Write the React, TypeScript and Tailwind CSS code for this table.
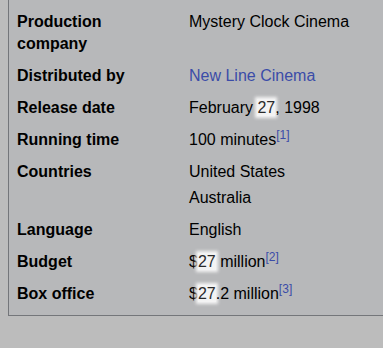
function Glow({ children }: { children: React.ReactNode }) {
  return (
    <span className="bg-[#f3f3f3] text-[#2a2a2a] shadow-[0_0_3px_2px_#f3f3f3]">
      {children}
    </span>
  );
}

function Ref({ n }: { n: number }) {
  return (
    <span className="relative -top-[6px] text-[12px] leading-none text-[#3b4ca8]">
      [{n}]
    </span>
  );
}

function Row({
  label,
  children,
}: {
  label: React.ReactNode;
  children: React.ReactNode;
}) {
  return (
    <div className="flex py-[5px]">
      <div className="w-[172px] shrink-0 pr-2 font-bold">{label}</div>
      <div className="flex-1">{children}</div>
    </div>
  );
}

export default function App() {
  return (
    <div
      className="h-[348px] w-[383px] overflow-hidden bg-[#bcbcbc] text-[16px] leading-[22px] text-black"
      style={{ fontFamily: '"Liberation Sans", Arial, sans-serif' }}
    >
      <div className="ml-2 -mt-[26px] border-b border-l border-[#74767a] bg-[#b7b8ba] pb-[5px] pl-2">
        <Row label="Music by">Trevor Jones</Row>
        <Row
          label={
            <>
              Production
              <br />
              company
            </>
          }
        >
          Mystery Clock Cinema
        </Row>
        <Row label="Distributed by">
          <span className="text-[#3b4ca8]">New Line Cinema</span>
        </Row>
        <Row label="Release date">
          February <Glow>27</Glow>, 1998
        </Row>
        <Row label="Running time">
          100 minutes
          <Ref n={1} />
        </Row>
        <Row label="Countries">
          <ul className="flex flex-col gap-[4px]">
            <li>United States</li>
            <li>Australia</li>
          </ul>
        </Row>
        <Row label="Language">English</Row>
        <Row label="Budget">
          $<Glow>27</Glow> million
          <Ref n={2} />
        </Row>
        <Row label="Box office">
          $<Glow>27</Glow>.2 million
          <Ref n={3} />
        </Row>
      </div>
    </div>
  );
}
